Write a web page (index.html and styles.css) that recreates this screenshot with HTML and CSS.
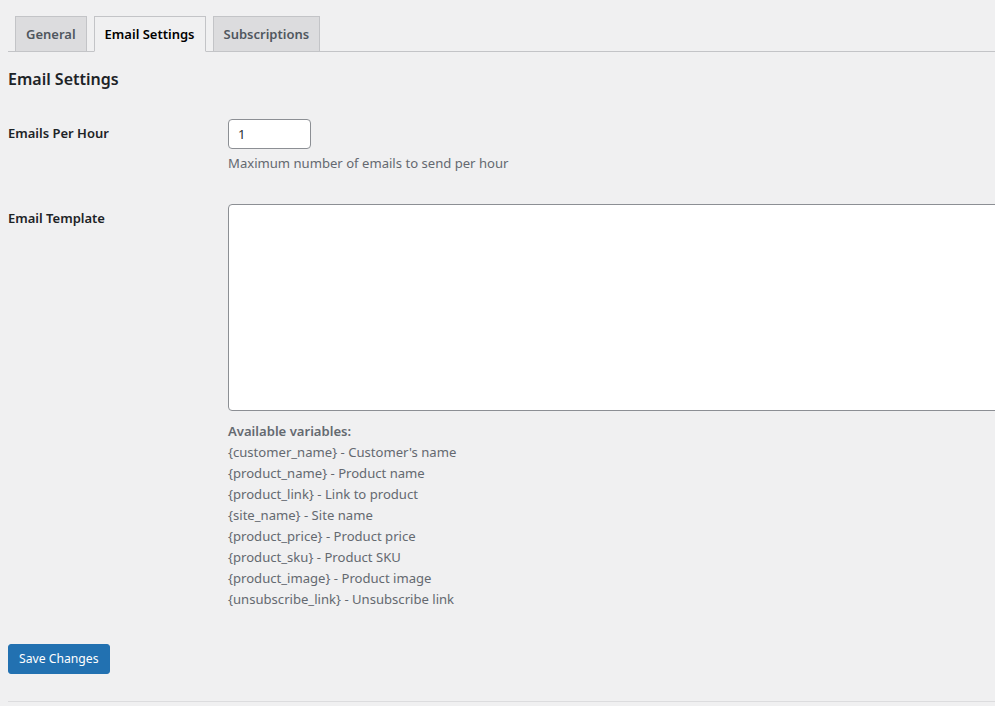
FILE: index.html
```html
<!DOCTYPE html>
<html>
<head>
<meta charset="utf-8">
<link rel="stylesheet" href="styles.css">
</head>
<body>
<div class="wrap">
  <nav class="tabs">
    <a class="tab">General</a>
    <a class="tab tab-active">Email Settings</a>
    <a class="tab">Subscriptions</a>
  </nav>
  <h2 class="title">Email Settings</h2>
  <table class="form-table">
    <tr>
      <th>Emails Per Hour</th>
      <td>
        <div class="num-input">1</div>
        <p class="description">Maximum number of emails to send per hour</p>
      </td>
    </tr>
    <tr>
      <th>Email Template</th>
      <td>
        <div class="textarea"></div>
        <div class="vars">
          <div class="vars-title">Available variables:</div>
          <div>{customer_name} - Customer's name</div>
          <div>{product_name} - Product name</div>
          <div>{product_link} - Link to product</div>
          <div>{site_name} - Site name</div>
          <div>{product_price} - Product price</div>
          <div>{product_sku} - Product SKU</div>
          <div>{product_image} - Product image</div>
          <div>{unsubscribe_link} - Unsubscribe link</div>
        </div>
      </td>
    </tr>
  </table>
  <div class="submit">
    <button class="button-primary">Save Changes</button>
  </div>
  <div class="footer-line"></div>
</div>
</body>
</html>
```
FILE: styles.css
```css
html, body {
  margin: 0;
  padding: 0;
  background: #f0f0f1;
  overflow: hidden;
}
body {
  font-family: "Noto Sans", "Open Sans", sans-serif;
  font-size: 12.2px;
  color: #1d2327;
  width: 995px;
  height: 706px;
}
.wrap {
  padding-left: 8px;
}
.tabs {
  display: flex;
  align-items: flex-end;
  padding-top: 16px;
  border-bottom: 1px solid #c3c4c7;
}
.tab {
  display: block;
  margin-left: 7px;
  margin-bottom: -1px;
  padding: 5px 10px;
  border: 1px solid #c3c4c7;
  background: #dcdcde;
  color: #50575e;
  font-size: 13px;
  line-height: 24px;
  font-weight: 600;
}
.tab-active {
  background: #f0f0f1;
  color: #000;
  border-bottom-color: #f0f0f1;
}
.title {
  font-size: 16px;
  line-height: 23px;
  font-weight: 600;
  margin: 16px 0 13px;
  color: #1d2327;
}
.form-table {
  border-collapse: collapse;
  table-layout: fixed;
  width: 100%;
}
.form-table th {
  width: 210px;
  box-sizing: border-box;
  padding: 20px 10px 20px 0;
  text-align: left;
  vertical-align: top;
  font-size: 13px;
  line-height: 18px;
  font-weight: 600;
  color: #1d2327;
}
.form-table td {
  padding: 15px 0 15px 10px;
  vertical-align: top;
  font-size: 13.1px;
  line-height: 21px;
  overflow: hidden;
}
.num-input {
  box-sizing: border-box;
  width: 83px;
  height: 30px;
  border: 1px solid #8c8f94;
  border-radius: 4px;
  background: #fff;
  padding: 0 9px;
  line-height: 28px;
  color: #2c3338;
}
.description {
  margin: 4px 0 0;
  color: #646970;
}
.textarea {
  box-sizing: border-box;
  width: 900px;
  height: 207px;
  border: 1px solid #8c8f94;
  border-radius: 4px;
  background: #fff;
}
.vars {
  margin-top: 10px;
  color: #646970;
}
.vars-title {
  font-weight: 600;
}
.submit {
  padding: 19px 0 0;
}
.button-primary {
  display: block;
  height: 30px;
  padding: 0 10px;
  border: 1px solid #2271b1;
  border-radius: 3px;
  background: #2271b1;
  color: #fff;
  font-family: inherit;
  font-size: 12.2px;
  line-height: 28px;
}
.footer-line {
  margin-top: 27px;
  border-top: 1px solid #dcdcde;
}
```
